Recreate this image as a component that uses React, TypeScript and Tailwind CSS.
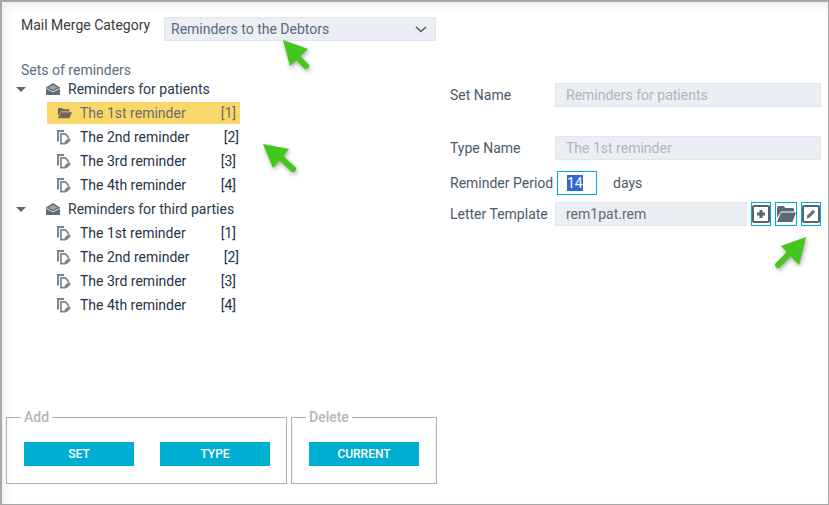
const sets = [
  { name: "Reminders for patients", items: [
    { t: "The 1st reminder", n: "[1]", pr: "pr-[4px]", sel: true },
    { t: "The 2nd reminder", n: "[2]", pr: "pr-[1px]", sel: false },
    { t: "The 3rd reminder", n: "[3]", pr: "pr-[4px]", sel: false },
    { t: "The 4th reminder", n: "[4]", pr: "pr-[4px]", sel: false },
  ]},
  { name: "Reminders for third parties", items: [
    { t: "The 1st reminder", n: "[1]", pr: "pr-[4px]", sel: false },
    { t: "The 2nd reminder", n: "[2]", pr: "pr-[1px]", sel: false },
    { t: "The 3rd reminder", n: "[3]", pr: "pr-[4px]", sel: false },
    { t: "The 4th reminder", n: "[4]", pr: "pr-[4px]", sel: false },
  ]},
];

function EnvelopeIcon() {
  return (
    <svg width="16" height="14" viewBox="0 0 16 14" className="shrink-0">
      <path d="M1 5.500 8 1l7 4.500V13H1z" fill="#5f6b76" />
      <path d="M3.500 5.500 8 2.800l4.500 2.700L8 8z" fill="#9aa3ab" />
      <path d="M1.500 6.500 8 10l6.500-3.500" fill="none" stroke="#dfe3e6" strokeWidth="1" />
    </svg>
  );
}

function FolderIcon() {
  return (
    <svg width="15" height="12" viewBox="0 0 15 12" className="shrink-0">
      <path d="M1 2.200C1 1.500 1.500 1 2.200 1h3l1.200 1.200h5c.6 0 1 .4 1 1V4.500H4L1 9z" fill="#6f6a58" />
      <path d="M3.800 5.300H15l-2.600 6H1z" fill="#6f6a58" />
    </svg>
  );
}

function DocIcon() {
  return (
    <svg width="14" height="15" viewBox="0 0 14 15" className="shrink-0">
      <path d="M7 1H1V11.500" fill="none" stroke="#7a858e" strokeWidth="2" />
      <path d="M8 13.700H4V3.800h4.300l2.500 2.500V8" fill="none" stroke="#7a858e" strokeWidth="1.700" />
      <path d="M7.500 14.500l.5-3.200 3.800-3.600 2.200 2.200-3.700 3.900z" fill="#7a858e" />
    </svg>
  );
}

function Caret() {
  return (
    <svg width="10" height="5" viewBox="0 0 10 5" className="shrink-0">
      <path d="M0 0h10L5 5z" fill="#5c6670" />
    </svg>
  );
}

const arrowCls = "absolute drop-shadow-[1px_2px_2px_rgba(0,0,0,0.35)]";

function ArrowNW({ className, a, b, c, d }: { className: string; a: string; b: string; c: string; d: string }) {
  return (
    <svg width="40" height="40" viewBox="-2 -2 40 40" className={arrowCls + " " + className}>
      <path d={`M0 0L${a}L${b}Z`} fill="#42c71a" />
      <path d={`M${c}L${d}`} stroke="#42c71a" strokeWidth="6" strokeLinecap="round" />
    </svg>
  );
}

function ArrowNE({ className }: { className: string }) {
  return (
    <svg width="40" height="40" viewBox="-36 -2 40 40" className={arrowCls + " " + className}>
      <path d="M0 0L-25 9L-7 28Z" fill="#42c71a" />
      <path d="M-15 15L-28 28" stroke="#42c71a" strokeWidth="6" strokeLinecap="round" />
    </svg>
  );
}

const label = "text-[14px] text-[#4a5a68] leading-none";
const readonly = "h-[24px] bg-[#ebeef2] border border-[#e2e5e9] flex items-center text-[14px]";

function IconBtn({ children, w }: { children: React.ReactNode; w: string }) {
  return <button className={"h-[24px] border border-[#00acd0] flex items-center justify-center " + w}>{children}</button>;
}

function Btn({ children }: { children: string }) {
  return (
    <button className="w-[110px] h-[24px] bg-[#00aed1] text-white text-[12px] font-medium flex items-center justify-center">
      {children}
    </button>
  );
}

export default function App() {
  return (
    <div
      className="relative w-[829px] h-[505px] flex bg-white border border-[#a9a9a9] border-t-2 border-l-2 shadow-[inset_3px_4px_8px_rgba(0,0,0,0.07)] overflow-hidden"
      style={{ fontFamily: "Roboto, 'Liberation Sans', sans-serif" }}
    >
      <div className="w-[445px] shrink-0 flex flex-col pl-[4px]">
        <div className="flex pl-[15px] pt-[15px]">
          <span className="w-[143px] mt-[1px] text-[14px] text-[#3b3b3b] leading-none">Mail Merge Category</span>
          <div className="w-[272px] h-[24px] bg-[#ebeef2] border border-[#e2e5e9] flex items-center justify-between pl-[6px] pr-[8px] text-[14px] text-[#5a6b7c]">
            <span>Reminders to the Debtors</span>
            <svg width="12" height="7" viewBox="0 0 12 7"><path d="M1 1l5 4.500L11 1" fill="none" stroke="#4a5a70" strokeWidth="1.600" /></svg>
          </div>
        </div>
        <div className="pl-[15px] mt-[23px] h-[13px] flex items-center text-[14px] text-[#5a6e80]">Sets of reminders</div>
        <div className="flex flex-col">
          {sets.map((s) => (
            <div key={s.name} className="flex flex-col">
              <div className="h-[24px] flex items-center text-[14px] text-[#28394a]">
                <span className="w-[39px] pl-[10px] flex"><Caret /></span>
                <EnvelopeIcon />
                <span className="ml-[7px]">{s.name}</span>
              </div>
              {s.items.map((it) => (
                <div key={it.t} className="h-[24px] flex items-center">
                  <div
                    className={"ml-[41px] w-[193px] flex items-center justify-between text-[14px] " + it.pr + (it.sel ? " bg-[#fad76b] text-[#6a6f6b] h-[22px]" : " text-[#1d3348] h-[24px]")}
                  >
                    <span className="flex items-center">
                      <span className="w-[33px] pl-[10px] flex">{it.sel ? <FolderIcon /> : <DocIcon />}</span>
                      {it.t}
                    </span>
                    <span>{it.n}</span>
                  </div>
                </div>
              ))}
            </div>
          ))}
        </div>
        <div className="flex gap-[4px] mt-[auto] mb-[20px]">
          <fieldset className="w-[281px] h-[74px] border border-[#b0b0b0] pl-[17px] pr-[16px] flex">
            <legend className="ml-[-3px] px-[3px] text-[14px] leading-none font-medium text-[#b4b6ba]">Add</legend>
            <div className="w-full flex justify-between mt-[18px]">
              <Btn>SET</Btn>
              <Btn>TYPE</Btn>
            </div>
          </fieldset>
          <fieldset className="w-[146px] h-[74px] border border-[#b0b0b0] pl-[17px]">
            <legend className="ml-[-3px] px-[3px] text-[14px] leading-none font-medium text-[#b4b6ba]">Delete</legend>
            <div className="flex mt-[18px]">
              <Btn>CURRENT</Btn>
            </div>
          </fieldset>
        </div>
      </div>

      <div className="flex-1 flex flex-col pl-[3px] pr-[7px] pt-[81px]">
        <div className="flex items-center">
          <span className={label + " w-[105px]"}>Set Name</span>
          <div className={readonly + " flex-1 pl-[10px] text-[#b0b6bd]"}>Reminders for patients</div>
        </div>
        <div className="flex items-center mt-[29px]">
          <span className={label + " w-[105px]"}>Type Name</span>
          <div className={readonly + " flex-1 pl-[10px] text-[#b0b6bd]"}>The 1st reminder</div>
        </div>
        <div className="flex items-center mt-[11px]">
          <span className={label + " w-[107px]"}>Reminder Period</span>
          <div className="w-[40px] h-[24px] border border-[#00acd0] flex items-center pl-[9px] text-[14px]">
            <span className="bg-[#3367d6] text-white leading-[16px]">14</span>
          </div>
          <span className={label + " ml-[16px]"}>days</span>
        </div>
        <div className="flex items-center mt-[7px]">
          <span className={label + " w-[105px]"}>Letter Template</span>
          <div className={readonly + " w-[192px] pl-[10px] text-[#5f6b78]"}>rem1pat.rem</div>
          <div className="flex ml-[4px] gap-[4px]">
            <IconBtn w="w-[20px]">
              <svg width="18" height="18" viewBox="0 0 18 18">
                <path d="M2 1h14a1 1 0 0 1 1 1v14a1 1 0 0 1-1 1H2a1 1 0 0 1-1-1V2a1 1 0 0 1 1-1z" fill="none" stroke="#55636e" strokeWidth="2" />
                <path d="M7.500 5h3v2.500H13v3h-2.500V13h-3v-2.500H5v-3h2.500z" fill="#55636e" />
              </svg>
            </IconBtn>
            <IconBtn w="w-[22px]">
              <svg width="20" height="18" viewBox="0 0 20 18">
                <path d="M1 2.500C1 1.700 1.700 1 2.500 1h5l2 2h7c.8 0 1.500.7 1.500 1.500V6.500H5L1 13z" fill="#5b6973" />
                <path d="M5 7.500h15L16.500 17H1z" fill="#5b6973" />
              </svg>
            </IconBtn>
            <IconBtn w="w-[20px]">
              <svg width="18" height="18" viewBox="0 0 18 18">
                <path d="M2 1h14a1 1 0 0 1 1 1v14a1 1 0 0 1-1 1H2a1 1 0 0 1-1-1V2a1 1 0 0 1 1-1z" fill="none" stroke="#55636e" strokeWidth="2" />
                <path d="M4.500 13.500l.7-3L11 4.700l2.300 2.300-5.800 5.800z" fill="#66737d" />
              </svg>
            </IconBtn>
          </div>
        </div>
      </div>

      <ArrowNW className="left-[279px] top-[36px]" a="25 9" b="7 26" c="14 17" d="23 26" />
      <ArrowNW className="left-[259px] top-[140px]" a="26 5" b="10 24" c="18 14" d="30 25" />
      <ArrowNE className="left-[768px] top-[233px]" />
    </div>
  );
}
